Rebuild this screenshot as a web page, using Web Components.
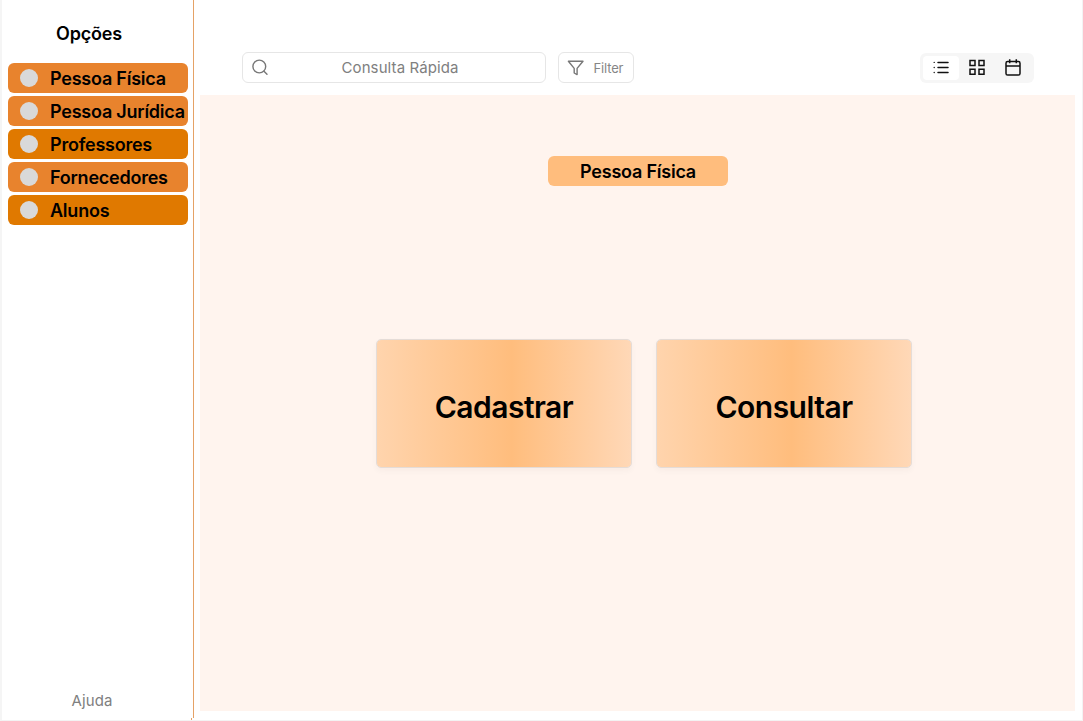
<!DOCTYPE html>
<html lang="pt-BR">
<head>
<meta charset="utf-8">
<title>Pessoa Física</title>
<style>
html, body { margin: 0; height: 100%; }
body { font-family: Inter, "Liberation Sans", sans-serif; overflow: hidden; background: #fff; color: #000; }
</style>
</head>
<body>
<app-shell>
  <side-nav slot="nav" heading="Opções">
    <nav-item>Pessoa Física</nav-item>
    <nav-item>Pessoa Jurídica</nav-item>
    <nav-item strong>Professores</nav-item>
    <nav-item>Fornecedores</nav-item>
    <nav-item strong>Alunos</nav-item>
    <span slot="help">Ajuda</span>
  </side-nav>
  <tool-bar slot="bar">
    <search-box>Consulta Rápida</search-box>
    <filter-button>Filter</filter-button>
    <view-switch></view-switch>
  </tool-bar>
  <title-tag>Pessoa Física</title-tag>
  <card-row>
    <action-card>Cadastrar</action-card>
    <action-card>Consultar</action-card>
  </card-row>
</app-shell>
<script>
const define = (name, html, setup) => {
  const template = document.createElement('template');
  template.innerHTML = html;
  customElements.define(name, class extends HTMLElement {
    constructor() {
      super();
      this.attachShadow({ mode: 'open' }).append(template.content.cloneNode(true));
    }
    connectedCallback() { if (setup) setup(this); }
  });
};

define('app-shell', `
<style>
:host { display: grid; grid-template-columns: 191px 1fr; box-sizing: border-box; width: 100vw; height: 100vh;
  border-left: 2px solid #f5f5f5; border-right: 1px solid #f3f3f3; border-bottom: 1px solid #f3f3f3; }
.nav { display: grid; grid-template-rows: 1fr 2px; }
.tick { justify-self: end; width: 1px; height: 2px; margin-right: 1px; background: #e5a266; }
.main { display: grid; grid-template-rows: 95px 1fr; margin-bottom: 9px; }
.line { border-left: 1px solid #e5a266; margin-bottom: 2px; }
.right { display: grid; grid-template-columns: 7px 1fr; }
.content { background: #fff4ee; margin-right: 7px; display: flex; flex-direction: column; align-items: center; }
</style>
<div class="nav"><slot name="nav"></slot><div class="tick"></div></div>
<div class="right"><div class="line"></div>
<div class="main"><slot name="bar"></slot><div class="content"><slot></slot></div></div></div>`);

define('side-nav', `
<style>
:host { display: flex; flex-direction: column; padding: 0 5px 0 6px; }
h1 { margin: 0 0 0 48px; padding-top: 23px; height: 40px; font: 600 18px/22px Inter, sans-serif; letter-spacing: -0.2px; }
nav { display: flex; flex-direction: column; gap: 3px; }
footer { margin: auto 0 7px 63.6px; font-size: 15px; line-height: 20px; color: #808080; letter-spacing: 0.1px; }
</style>
<h1></h1><nav><slot></slot></nav><footer><slot name="help"></slot></footer>`,
el => { el.shadowRoot.querySelector('h1').textContent = el.getAttribute('heading'); });

define('nav-item', `
<style>
:host { display: flex; align-items: center; box-sizing: border-box; width: 180px; height: 30px; padding-left: 12px; gap: 12px;
  border-radius: 6px; background: #e8832d; font-size: 18px; font-weight: 600; line-height: 28px; letter-spacing: -0.23px; white-space: nowrap; }
:host([strong]) { background: #e07900; }
i { flex: none; width: 18px; height: 18px; border-radius: 50%; background: #d9d9d9; }
span { padding-top: 2px; }
</style>
<i></i><span><slot></slot></span>`);

define('tool-bar', `
<style>
:host { display: flex; align-items: flex-start; padding: 52px 48px 0 42px; gap: 12px; }
::slotted(view-switch) { margin-left: auto; }
</style>
<slot></slot>`);

define('search-box', `
<style>
:host { display: flex; align-items: center; box-sizing: border-box; width: 304px; height: 31px; padding-left: 9px;
  border: 1px solid #e6e6e6; border-radius: 6px; font-size: 15px; color: #808080; }
svg { flex: none; }
span { margin-left: 72.5px; letter-spacing: 0.1px; }
</style>
<svg width="17" height="17" viewBox="0 0 17 17" fill="none" stroke="#777" stroke-width="1.4" stroke-linecap="round"><circle cx="7.3" cy="7.5" r="6.4"/><path d="M12 12.2 15 15.3"/></svg>
<span><slot></slot></span>`);

define('filter-button', `
<style>
:host { display: flex; align-items: center; box-sizing: border-box; width: 76px; height: 31px; padding-left: 8px; gap: 9.5px;
  border: 1px solid #e6e6e6; border-radius: 6px; font-size: 13px; color: #868686; letter-spacing: -0.15px; }
</style>
<svg width="17" height="16" viewBox="0 0 17 16" fill="none" stroke="#777" stroke-width="1.4" stroke-linejoin="round"><path d="M1.4 1.2H16L10.1 8.4v6.2L7.2 13V8.4Z"/></svg>
<span><slot></slot></span>`);

define('view-switch', `
<style>
:host { display: grid; grid-template-columns: repeat(3, 36px); box-sizing: border-box; width: 114px; height: 30px; padding: 3px;
  margin-top: .5px; border-radius: 6px; background: #f6f6f6; }
div { display: grid; place-items: center; }
.on { background: #fff; border-radius: 4px; }
svg { display: block; margin-bottom: 1.4px; fill: none; stroke: #111; stroke-width: 1.5; }
</style>
<div class="on"><svg width="18" height="18" viewBox="0 0 18 18" stroke-linecap="round"><path d="M6 4.4H16M6 9.5H16M6 14.5H16"/><path d="M2.2 4.4h.01M2.2 9.5h.01M2.2 14.5h.01" stroke-width="1.4"/></svg></div>
<div><svg width="18" height="18" viewBox="0 0 18 18"><path d="M2 2.6h5v5H2ZM11 2.6h5v5h-5ZM2 11.3h5v5H2ZM11 11.3h5v5h-5Z"/></svg></div>
<div><svg width="18" height="18" viewBox="0 0 18 18"><rect x="2" y="3.6" width="14" height="13.4" rx="1.6"/><path d="M2 7.9h14M5.7 1.2v4M12.3 1.2v4"/></svg></div>`);

define('title-tag', `
<style>
:host { display: grid; place-items: center; width: 180px; height: 30px; margin: 61px 0 153px 0; box-sizing: border-box;
  border-radius: 6px; background: #ffbd7d; font-size: 18px; font-weight: 600; line-height: 28px; letter-spacing: -0.22px; }
span { padding: 2px 0 0 1px; }
</style>
<span><slot></slot></span>`);

define('card-row', `
<style>:host { display: flex; gap: 24px; margin-left: 13px; }</style>
<slot></slot>`);

define('action-card', `
<style>
:host { display: grid; place-items: center; box-sizing: border-box; width: 256px; height: 129px; padding-top: 6px;
  border: 1px solid #e5dcd7; border-radius: 5px; background: linear-gradient(90deg, #ffd4ad, #ffbd7d 53%, #ffd8b7) padding-box;
  box-shadow: 0 3px 6px rgba(60,30,20,.035); font-size: 30px; font-weight: 600; line-height: 38px; letter-spacing: -0.52px; }
</style>
<span><slot></slot></span>`);
</script>
</body>
</html>
